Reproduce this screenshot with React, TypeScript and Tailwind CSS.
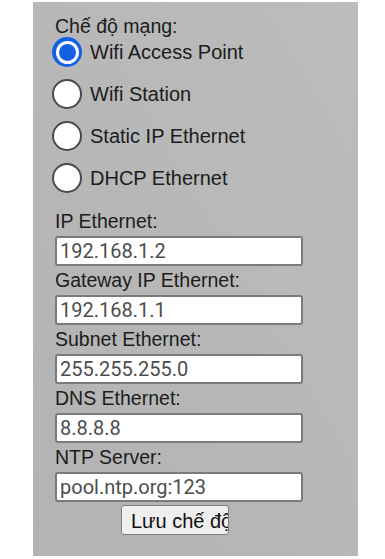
import React, { useState } from 'react';

const MODES = ['Wifi Access Point', 'Wifi Station', 'Static IP Ethernet', 'DHCP Ethernet'];

const FIELDS = [
  { label: 'IP Ethernet:', value: '192.168.1.2' },
  { label: 'Gateway IP Ethernet:', value: '192.168.1.1' },
  { label: 'Subnet Ethernet:', value: '255.255.255.0' },
  { label: 'DNS Ethernet:', value: '8.8.8.8' },
  { label: 'NTP Server:', value: 'pool.ntp.org:123' },
];

const Radio: React.FC<{ checked: boolean }> = ({ checked }) =>
  checked ? (
    <span className="w-[30px] h-[30px] rounded-full bg-[#1160e6] flex items-center justify-center shrink-0">
      <span className="w-[23px] h-[23px] rounded-full bg-white flex items-center justify-center">
        <span className="w-[17px] h-[17px] rounded-full bg-[#1160e6]" />
      </span>
    </span>
  ) : (
    <span className="w-[30px] h-[30px] rounded-full bg-white border-[2px] border-[#4a4a4a] shrink-0" />
  );

export default function App() {
  const [mode, setMode] = useState(0);
  const [values, setValues] = useState(FIELDS.map((f) => f.value));

  return (
    <div className="w-[385px] h-[559px] bg-white overflow-hidden" style={{ fontFamily: '"Liberation Sans", Arial, sans-serif' }}>
      <div className="ml-[33px] mt-[2px] w-[325px] h-[554px] bg-gradient-to-bl from-[#bcbcbc] to-[#b3b3b3] pl-[22px] pt-[13px] text-[#1c1c1c]">
        <div className="h-[23px] leading-[23px] text-[19.5px]">Chế độ mạng:</div>
        <div className="flex flex-col gap-[12px] -mt-[1px] -ml-[3px]">
          {MODES.map((m, i) => (
            <label key={m} className="flex items-center gap-[8px] h-[30px] cursor-pointer" onClick={() => setMode(i)}>
              <Radio checked={mode === i} />
              <span className="text-[20px] leading-[30px]">{m}</span>
            </label>
          ))}
        </div>
        <div className="mt-[17px] flex flex-col gap-[3px]">
          {FIELDS.map((f, i) => (
            <div key={f.label} className="flex flex-col">
              <div className="h-[23px] leading-[23px] text-[19.5px] mb-[3px]">{f.label}</div>
              <input
                value={values[i]}
                onChange={(e) => setValues(values.map((v, j) => (j === i ? e.target.value : v)))}
                className="w-[248px] h-[30px] bg-white border-[2px] border-[#7b7b7b] rounded-[3px] pl-[3px] text-[20px] text-[#4d4d4d] outline-none"
                style={{ fontFamily: 'Roboto, "Liberation Sans", sans-serif' }}
              />
            </div>
          ))}
        </div>
        <button className="mt-[3px] ml-[66px] w-[108px] h-[30px] bg-[#efefef] border border-[#7d7d7d] rounded-[3px] pl-[9px] text-left text-[20px] text-[#111] whitespace-nowrap overflow-hidden">
          Lưu chế độ
        </button>
      </div>
    </div>
  );
}
